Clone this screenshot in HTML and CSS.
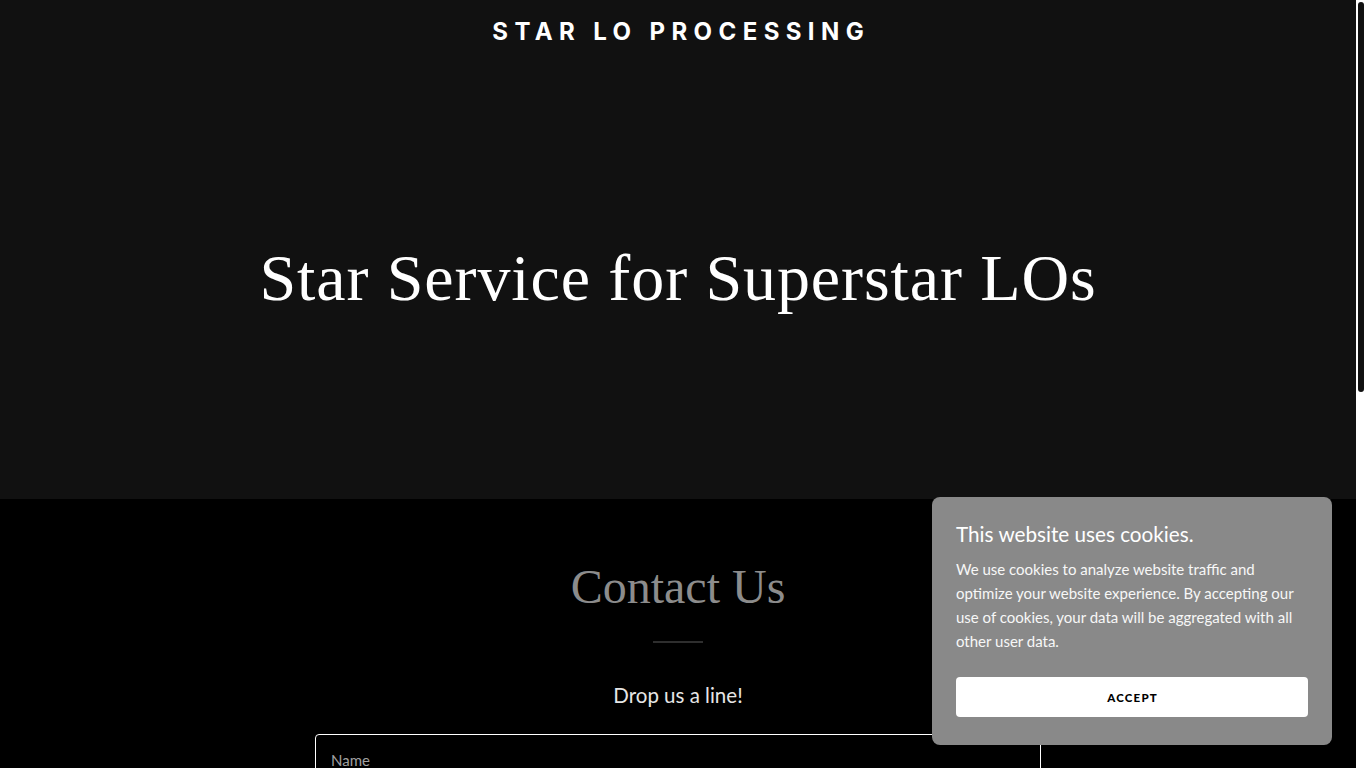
FILE: index.html
```html
<!DOCTYPE html>
<html lang="en">
<head>
<meta charset="utf-8">
<title>Star LO Processing</title>
<link rel="stylesheet" href="styles.css">
</head>
<body>
<div class="page">
  <div class="hero">
    <header class="site-header">
      <div class="brand">STAR LO PROCESSING</div>
    </header>
    <div class="hero-body">
      <h1 class="hero-title">Star Service for Superstar LOs</h1>
    </div>
  </div>
  <section class="contact">
    <h2 class="contact-title">Contact Us</h2>
    <div class="divider"></div>
    <p class="contact-sub">Drop us a line!</p>
    <form class="form">
      <div class="field"><span class="field-label">Name</span></div>
      <div class="field"><span class="field-label">Email*</span></div>
      <div class="field field-tall"><span class="field-label">Message</span></div>
      <div class="send">SEND</div>
    </form>
  </section>
  <footer class="footer">
    <p>Copyright © 2024 Star LO Processing - All Rights Reserved.</p>
  </footer>
</div>
<div class="scrollbar"><div class="scrollbar-thumb"></div></div>
<div class="cookie">
  <div class="cookie-title">This website uses cookies.</div>
  <p class="cookie-text">We use cookies to analyze website traffic and optimize your website experience. By accepting our use of cookies, your data will be aggregated with all other user data.</p>
  <div class="cookie-btn">ACCEPT</div>
</div>
</body>
</html>
```

FILE: styles.css
```css
html {
  background: #000;
}
::-webkit-scrollbar {
  display: none;
}
body {
  margin: 0;
  background: #000;
  font-family: "Lato", "Liberation Sans", sans-serif;
  color: #fff;
}
.page {
  margin-right: 10px;
}
.scrollbar {
  position: fixed;
  top: 0;
  right: 0;
  width: 10px;
  height: 100vh;
  background: #fff;
}
.scrollbar-thumb {
  margin: 2px 0 0 2px;
  width: 6px;
  height: 390px;
  background: #111;
  border-radius: 3px;
}
.hero {
  background: #111;
  height: 499px;
  display: flex;
  flex-direction: column;
}
.site-header {
  padding-top: 16px;
  display: flex;
  justify-content: center;
}
.brand {
  font-family: "Inter", "DejaVu Sans", sans-serif;
  font-weight: 700;
  font-size: 24px;
  line-height: 32px;
  letter-spacing: 6.4px;
  padding-left: 6.4px;
  color: #fff;
}
.hero-body {
  flex: 1;
  display: flex;
  justify-content: center;
  padding-top: 190px;
}
.hero-title {
  margin: 0;
  font-family: "Liberation Serif", "DejaVu Serif", serif;
  font-weight: 400;
  font-size: 66px;
  line-height: 80px;
  letter-spacing: 0.9px;
  color: #fff;
}
.contact {
  display: flex;
  flex-direction: column;
  align-items: center;
  padding-top: 56px;
}
.contact-title {
  margin: 0;
  font-family: "Liberation Serif", "DejaVu Serif", serif;
  font-weight: 400;
  font-size: 48px;
  line-height: 64px;
  color: #8c8c8c;
}
.divider {
  width: 50px;
  height: 2px;
  background: #2e2e2e;
  margin-top: 22px;
}
.contact-sub {
  margin: 37px 0 0;
  font-size: 20.5px;
  line-height: 30px;
  color: #e6e6e6;
}
.form {
  width: 726px;
  margin-top: 24px;
  display: flex;
  flex-direction: column;
  gap: 24px;
}
.field {
  height: 56px;
  border: 1px solid #fff;
  border-radius: 4px;
  padding: 15px 15px 0;
  box-sizing: border-box;
}
.field-tall {
  height: 150px;
}
.field-label {
  font-size: 15px;
  color: #a0a0a0;
}
.send {
  height: 48px;
  background: #fff;
  color: #000;
  border-radius: 4px;
  display: flex;
  align-items: center;
  justify-content: center;
  font-weight: 700;
  font-size: 13px;
  letter-spacing: 2px;
}
.footer {
  padding: 120px 0 80px;
  text-align: center;
  color: #aaa;
  font-size: 14px;
}
.cookie {
  position: fixed;
  right: 34px;
  bottom: 23px;
  width: 400px;
  box-sizing: border-box;
  padding: 23px 24px 28px;
  background: #898989;
  border-radius: 8px;
}
.cookie-title {
  font-size: 20.7px;
  line-height: 28px;
  color: #fff;
}
.cookie-text {
  margin: 9px 0 0;
  font-size: 15px;
  line-height: 24px;
  color: #f7f7f7;
}
.cookie-btn {
  margin-top: 24px;
  height: 40px;
  background: #fff;
  border-radius: 4px;
  display: flex;
  align-items: center;
  justify-content: center;
  color: #000;
  font-weight: 900;
  font-size: 11.5px;
  letter-spacing: 1.2px;
  padding-left: 1.2px;
}
```
